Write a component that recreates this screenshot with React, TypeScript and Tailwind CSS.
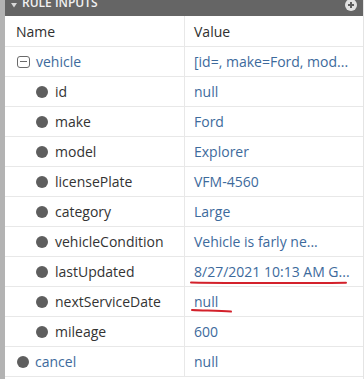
import React from 'react';

type Row = {
  name: string;
  value: string;
  level: 0 | 1;
  kind: 'group' | 'leaf';
  mark?: 'long' | 'short';
};

const rows: Row[] = [
  { name: 'vehicle', value: '[id=, make=Ford, mod...', level: 0, kind: 'group' },
  { name: 'id', value: 'null', level: 1, kind: 'leaf' },
  { name: 'make', value: 'Ford', level: 1, kind: 'leaf' },
  { name: 'model', value: 'Explorer', level: 1, kind: 'leaf' },
  { name: 'licensePlate', value: 'VFM-4560', level: 1, kind: 'leaf' },
  { name: 'category', value: 'Large', level: 1, kind: 'leaf' },
  { name: 'vehicleCondition', value: 'Vehicle is farly ne...', level: 1, kind: 'leaf' },
  { name: 'lastUpdated', value: '8/27/2021 10:13 AM G...', level: 1, kind: 'leaf', mark: 'long' },
  { name: 'nextServiceDate', value: 'null', level: 1, kind: 'leaf', mark: 'short' },
  { name: 'mileage', value: '600', level: 1, kind: 'leaf' },
  { name: 'cancel', value: 'null', level: 0, kind: 'leaf' },
];

function Bullet() {
  return <span className="block h-[12px] w-[12px] shrink-0 rounded-full bg-[#5e5e5e]" />;
}

function MinusBox() {
  return (
    <span className="flex h-[12px] w-[13px] shrink-0 items-center justify-center rounded-[3px] border border-[#6a6a6a]">
      <span className="block h-px w-[7px] bg-[#6a6a6a]" />
    </span>
  );
}

function Scribble({ mark }: { mark: 'long' | 'short' }) {
  if (mark === 'long') {
    return (
      <svg className="pointer-events-none absolute left-0 top-0" width="178" height="30">
        <path d="M6 25.5 C60 26.5 120 26 161 25.8" stroke="#d3212b" strokeWidth="2" fill="none" strokeLinecap="round" />
      </svg>
    );
  }
  return (
    <svg className="pointer-events-none absolute left-0 top-0" width="178" height="30">
      <path d="M7 23 C20 23.6 34 23.8 46 24.6" stroke="#d3212b" strokeWidth="2" fill="none" strokeLinecap="round" />
    </svg>
  );
}

export default function App() {
  return (
    <div className="flex h-[379px] w-[364px] bg-white font-['Open_Sans',sans-serif] text-[14px]">
      {/* left gutter */}
      <div className="w-[5px] shrink-0 bg-[#b3b3b3]" />

      <div className="flex flex-1 flex-col overflow-hidden border-r border-[#e4e4e4]">
        {/* header */}
        <div className="relative flex h-[16px] shrink-0 items-end overflow-hidden bg-[#656565]">
          <svg className="absolute left-[6px] top-[3px]" width="6" height="5" viewBox="0 0 6 5">
            <path d="M0 0 H6 L3 4.5 Z" fill="#d9d9d9" />
          </svg>
          <span className="absolute left-[17px] top-[-5px] text-[12px] font-semibold leading-[16px] text-[#f2f2f2]">
            RULE INPUTS
          </span>
          <svg className="absolute right-[6px] top-[-1px]" width="12" height="12" viewBox="0 0 12 12">
            <circle cx="6" cy="6" r="6" fill="#e2e2e2" />
            <path d="M6 3 V9 M3 6 H9" stroke="#5e5e5e" strokeWidth="2" />
          </svg>
        </div>

        {/* column headings */}
        <div className="grid h-[31px] shrink-0 grid-cols-[180px_1fr] border-b border-[#e8e8e8] text-[#2f2f2f]">
          <div className="flex items-center border-r border-[#e8e8e8] pl-[11px]">Name</div>
          <div className="flex items-center pl-[9px]">Value</div>
        </div>

        {rows.map((r) => (
          <div key={r.name} className="grid h-[30px] shrink-0 grid-cols-[180px_1fr] border-b border-[#e8e8e8]">
            <div
              className={
                r.level === 0
                  ? 'flex items-center gap-[6px] border-r border-[#e8e8e8] pl-[12px] text-[#3d6a9c]'
                  : 'flex items-center gap-[7px] border-r border-[#e8e8e8] pl-[31px] text-[#333333]'
              }
            >
              {r.kind === 'group' ? <MinusBox /> : <Bullet />}
              <span>{r.name}</span>
            </div>
            <div className="relative flex items-center whitespace-nowrap pl-[9px] text-[#3d6a9c]">
              {r.value}
              {r.mark && <Scribble mark={r.mark} />}
            </div>
          </div>
        ))}
      </div>
    </div>
  );
}
